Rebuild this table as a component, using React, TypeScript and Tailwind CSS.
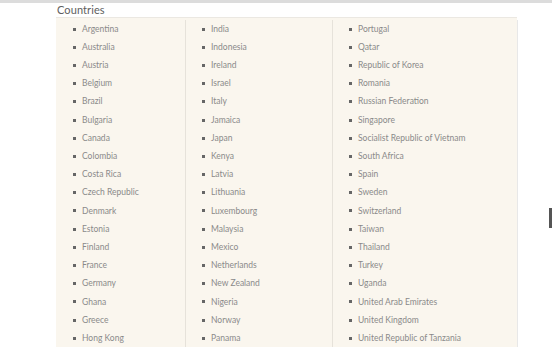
import React from "react";

const cols: { w: string; bl: string; items: string[] }[] = [
  {
    w: "w-[129px]",
    bl: "pl-[17px]",
    items: [
      "Argentina", "Australia", "Austria", "Belgium", "Brazil", "Bulgaria", "Canada", "Colombia", "Costa Rica",
      "Czech Republic", "Denmark", "Estonia", "Finland", "France", "Germany", "Ghana", "Greece", "Hong Kong",
    ],
  },
  {
    w: "w-[147px]",
    bl: "pl-[16px]",
    items: [
      "India", "Indonesia", "Ireland", "Israel", "Italy", "Jamaica", "Japan", "Kenya", "Latvia", "Lithuania",
      "Luxembourg", "Malaysia", "Mexico", "Netherlands", "New Zealand", "Nigeria", "Norway", "Panama",
    ],
  },
  {
    w: "w-[185px]",
    bl: "pl-[16px]",
    items: [
      "Portugal", "Qatar", "Republic of Korea", "Romania", "Russian Federation", "Singapore",
      "Socialist Republic of Vietnam", "South Africa", "Spain", "Sweden", "Switzerland", "Taiwan", "Thailand",
      "Turkey", "Uganda", "United Arab Emirates", "United Kingdom", "United Republic of Tanzania",
    ],
  },
];

export default function App() {
  return (
    <div
      className="w-[552px] h-[351px] overflow-hidden bg-white relative"
      style={{ fontFamily: "Lato, 'Open Sans', sans-serif" }}
    >
      <div className="h-[3px] bg-[#dcdcdc]" />
      <div className="flex">
        <div className="w-[56px]" />
        <div className="flex flex-col">
          <div className="h-[14px] pl-[1px] text-[11px] leading-[13px] text-[#5e5e5e] tracking-[0.1px]">Countries</div>
          <div className="flex bg-[#faf6ee] border-t border-[#ebe8e2] pt-[2px]">
            {cols.map((c, i) => (
              <div
                key={i}
                className={`${c.w} ${i > 0 ? "border-l border-[#e6e2da]" : ""} ${c.bl}`}
              >
                {c.items.map((t) => (
                  <div key={t} className="h-[18.2px] flex items-center">
                    <span className="w-[3px] h-[3px] bg-[#666] mr-[6px] shrink-0" />
                    <span className="text-[8.5px] text-[#8a8a8a] whitespace-nowrap">{t}</span>
                  </div>
                ))}
              </div>
            ))}
          </div>
        </div>
        <div className="w-[1px] bg-[#e8e8e8] mt-[17px]" />
        <div className="flex-1" />
      </div>
      <div className="absolute right-0 top-[208px] w-[3px] h-[20px] bg-[#555]" />
    </div>
  );
}
